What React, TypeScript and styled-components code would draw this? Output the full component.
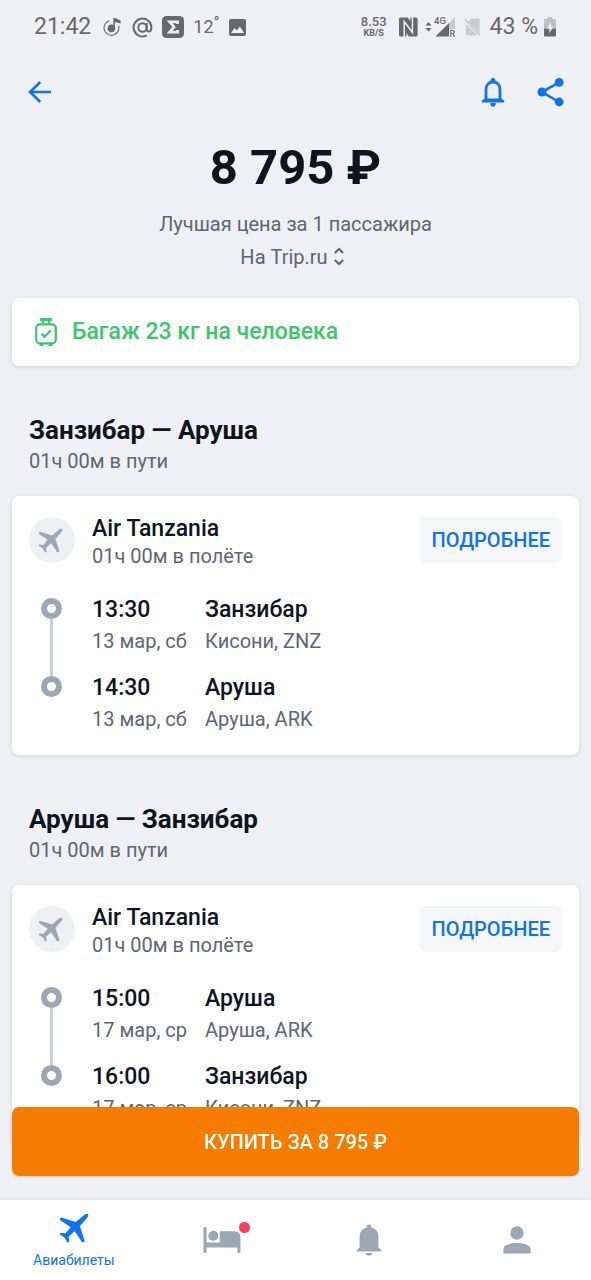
import React from 'react';
import styled, { createGlobalStyle } from 'styled-components';

const color = {
  page: '#eef0f4',
  ink: '#0e151f',
  muted: '#5d6673',
  blue: '#0f73ee',
  green: '#3cc76c',
  orange: '#f67c00',
  steel: '#9ca7b5',
  status: '#68696b',
};

const GlobalStyle = createGlobalStyle`
  *, *::before, *::after { box-sizing: border-box; }
  body {
    margin: 0;
    background: ${color.page};
    color: ${color.ink};
    font-family: Roboto, 'Noto Sans', sans-serif;
  }
  h1, h2, h3, p, ol, ul { margin: 0; padding: 0; }
  ol, ul { list-style: none; }
  svg { display: block; flex: none; }
`;

const Screen = styled.div`
  display: flex;
  flex-direction: column;
  height: 100vh;
`;

/* ---------- status bar ---------- */

const StatusBar = styled.header`
  display: flex;
  justify-content: space-between;
  align-items: center;
  height: 54px;
  padding: 0 35px 0 34px;
  color: ${color.status};
`;

const StatusGroup = styled.div<{ $gap: number }>`
  display: flex;
  align-items: center;
  gap: ${({ $gap }) => $gap}px;
`;

const StatusText = styled.span`
  font-size: 23px;
  line-height: 28px;
`;

const Clock = styled(StatusText)`
  padding-right: 3px;
`;

const Temperature = styled.span`
  display: flex;
  font-size: 18px;
  line-height: 28px;
`;

const Degree = styled.span`
  font-size: 16px;
  line-height: 20px;
`;

const Speed = styled.span`
  display: flex;
  flex-direction: column;
  align-items: center;
  padding-right: 6px;
  font-size: 13px;
  font-weight: 500;
  line-height: 12px;
`;

const SpeedUnit = styled.small`
  font-size: 9px;
  font-weight: 700;
  line-height: 10px;
`;

/* ---------- toolbar and price ---------- */

const Toolbar = styled.div`
  display: flex;
  justify-content: space-between;
  align-items: center;
  height: 76px;
  padding: 0 26px;
`;

const ToolbarActions = styled.div`
  display: flex;
  gap: 32px;
`;

const IconButton = styled.button`
  display: flex;
  padding: 0;
  border: 0;
  background: none;
  color: ${color.blue};
  cursor: pointer;
`;

const Scroller = styled.main`
  flex: 1;
  min-height: 0;
  overflow-y: auto;
  padding: 0 12px;
  scrollbar-width: none;
`;

const Hero = styled.section`
  display: flex;
  flex-direction: column;
  align-items: center;
  padding: 10px 0 25px;
`;

const Price = styled.h1`
  font-size: 49px;
  font-weight: 700;
  line-height: 56px;
`;

const Note = styled.p`
  margin-top: 11px;
  color: ${color.muted};
  font-size: 20px;
  line-height: 34px;
`;

const AgentButton = styled.button`
  display: flex;
  align-items: center;
  gap: 5px;
  padding: 0 6px 0 0;
  border: 0;
  background: none;
  color: ${color.muted};
  font: inherit;
  font-size: 20px;
  line-height: 32px;
  cursor: pointer;
`;

/* ---------- cards ---------- */

const Card = styled.div`
  border-radius: 7px;
  background: #fff;
  box-shadow: 0 1px 4px rgba(40, 50, 80, 0.14);
`;

const Baggage = styled(Card)`
  display: flex;
  align-items: center;
  gap: 14px;
  min-height: 68px;
  padding: 0 22px;
  color: ${color.green};
  font-size: 23px;
  font-weight: 500;
  line-height: 32px;
`;

const Leg = styled.section`
  margin-top: 48px;
`;

const LegTitle = styled.h2`
  padding: 0 17px;
  font-size: 26px;
  font-weight: 700;
  line-height: 32px;
`;

const LegDuration = styled.p`
  padding: 0 17px;
  color: ${color.muted};
  font-size: 20px;
  line-height: 30px;
`;

const FlightCard = styled(Card)`
  margin-top: 20px;
  padding: 21px 17px;
`;

const Airline = styled.div`
  display: flex;
  align-items: flex-start;
  gap: 17px;
`;

const AirlineLogo = styled.div`
  display: flex;
  justify-content: center;
  align-items: center;
  width: 46px;
  height: 46px;
  padding-right: 3px;
  border-radius: 50%;
  background: ${color.page};
  color: ${color.steel};
`;

const AirlineInfo = styled.div`
  flex: 1;
`;

const AirlineName = styled.h3`
  font-size: 23px;
  font-weight: 500;
  line-height: 24px;
`;

const Muted = styled.p`
  color: ${color.muted};
  font-size: 20px;
  line-height: 30px;
`;

const DetailsButton = styled.button`
  height: 46px;
  padding: 0 12px;
  border: 0;
  border-radius: 7px;
  background: #f5f6f8;
  color: ${color.blue};
  font: inherit;
  font-size: 20px;
  font-weight: 500;
  cursor: pointer;
`;

const Route = styled.div`
  display: flex;
  gap: 17px;
  margin-top: 23px;
`;

const Track = styled.div`
  display: flex;
  flex-direction: column;
  align-items: center;
  width: 46px;
  padding: 4px 1px 37px 0;
`;

const Ring = styled.span`
  width: 21px;
  height: 21px;
  border: 6px solid ${color.steel};
  border-radius: 50%;
`;

const TrackLine = styled.span`
  flex: 1;
  width: 3px;
  background: #ccd0d6;
`;

const Stops = styled.ol`
  display: flex;
  flex: 1;
  flex-direction: column;
  gap: 16px;
`;

const Stop = styled.li`
  display: grid;
  grid-template-columns: 113px 1fr;
`;

const Strong = styled.p`
  font-size: 23px;
  font-weight: 500;
  line-height: 32px;
`;

const BuyButton = styled.button`
  position: sticky;
  bottom: 24px;
  display: block;
  width: 100%;
  height: 69px;
  margin: 24px 0;
  border: 0;
  border-radius: 7px;
  background: ${color.orange};
  box-shadow: 0 1px 3px rgba(40, 50, 80, 0.14);
  color: #fff;
  font: inherit;
  font-size: 20px;
  font-weight: 500;
  cursor: pointer;
`;

/* ---------- bottom navigation ---------- */

const TabBar = styled.nav`
  display: grid;
  grid-template-columns: repeat(4, 1fr);
  height: 80px;
  background: #fff;
  box-shadow: 0 -1px 3px rgba(40, 50, 80, 0.1);
`;

const Tab = styled.a<{ $active?: boolean }>`
  display: flex;
  flex-direction: column;
  justify-content: center;
  align-items: center;
  gap: 7px;
  padding-top: ${({ $active }) => ($active ? 2 : 0)}px;
  color: ${({ $active }) => ($active ? color.blue : color.steel)};
  font-size: 14px;
  line-height: 20px;
  text-decoration: none;
`;

const TabIcon = styled.span`
  position: relative;
`;

const Badge = styled.span`
  position: absolute;
  top: -5px;
  right: -9px;
  width: 11px;
  height: 11px;
  border-radius: 50%;
  background: #fb3f5b;
`;

/* ---------- icons ---------- */

const Plane = ({ size }: { size: number }) => (
  <svg width={size} height={size} viewBox="0 0 30 30" fill="currentColor" aria-hidden="true">
    <path d="M25.2 1.9C26.6.7 28.2.6 28.9 1.2C29.5 1.9 29.3 3.5 28.1 4.8L20.9 13.2L25.6 27.4C25.8 28.3 25 29.3 23.6 29.2L22.8 28.8L15.8 18.3L9.6 23.6L10.3 27.9C10.3 28.8 9.3 29.5 8.4 29.2L5.6 24.4L.9 21.6C.5 20.7 1.2 19.7 2.1 19.7L6.4 20.4L11.7 14.2L1.2 7.2C.7 6.4 1 5 2.4 4.5L16.8 9.1Z" />
  </svg>
);

const BackIcon = () => (
  <svg width="26" height="26" viewBox="0 0 26 26" fill="none" stroke="currentColor" strokeWidth="2.6" aria-hidden="true">
    <path d="M25 13H4M14.3 3L4 13L14.3 23" />
  </svg>
);

const BellOutlineIcon = () => (
  <svg width="24" height="30" viewBox="0 0 24 30" aria-hidden="true">
    <path d="M5 22.5V12.5C5 7.5 8 5 12 5S19 7.5 19 12.5V22.5" fill="none" stroke="currentColor" strokeWidth="2.8" />
    <path d="M9.6 4.6V3.4A2.4 2.4 0 0 1 14.4 3.4V4.6ZM.8 23.4L3.8 21.6H20.2L23.2 23.4V25.6H.8ZM9.2 26H14.8C14.8 28.4 13.6 29.8 12 29.8S9.2 28.4 9.2 26Z" fill="currentColor" />
  </svg>
);

const ShareIcon = () => (
  <svg width="28" height="30" viewBox="0 0 28 30" fill="currentColor" aria-hidden="true">
    <path d="M22 5.3L5 15L22 25" fill="none" stroke="currentColor" strokeWidth="2.6" />
    <circle cx="5" cy="15" r="4.5" />
    <circle cx="22.2" cy="5.3" r="4.4" />
    <circle cx="22.2" cy="25" r="4.4" />
  </svg>
);

const ChevronsIcon = () => (
  <svg width="12" height="20" viewBox="0 0 12 20" fill="none" stroke="currentColor" strokeWidth="2" aria-hidden="true">
    <path d="M1.8 6L6 2L10.2 6M1.8 13L6 17L10.2 13" />
  </svg>
);

const SuitcaseIcon = () => (
  <svg width="24" height="30" viewBox="0 0 24 30" fill="none" stroke="currentColor" strokeWidth="2.2" aria-hidden="true">
    <path d="M6 2.6H18" strokeWidth="3" />
    <path d="M9 3V7M15 3V7" strokeWidth="2.4" />
    <rect x="2.2" y="7.4" width="19.6" height="19" rx="3.6" />
    <path d="M7.4 16.6L10.6 19.6L17 13.2" />
    <path d="M5.6 28H9.4M14.6 28H18.4" />
  </svg>
);

const BedIcon = () => (
  <svg width="38" height="26" viewBox="0 0 38 26" fill="currentColor" aria-hidden="true">
    <path d="M.5 1Q.5 0 1.5 0H2.6Q3.6 0 3.6 1V15.6H16.8V4.2H31Q37.5 4.4 37.5 10.6V25Q37.5 26 36.5 26H35.4Q34.4 26 34.4 25V20.6H3.6V25Q3.6 26 2.6 26H1.5Q.5 26 .5 25Z" />
    <circle cx="10.4" cy="8.8" r="5" />
  </svg>
);

const BellIcon = () => (
  <svg width="26" height="32" viewBox="0 0 26 32" fill="currentColor" aria-hidden="true">
    <path d="M10.8 3.6V2.6A2.2 2.2 0 0 1 15.2 2.6V3.6C19.6 4.6 22.4 7.8 22.4 12.6V23.2L25.4 26.4V27.4H.6V26.4L3.6 23.2V12.6C3.6 7.8 6.4 4.6 10.8 3.6ZM9.8 28.9H16.2C16 30.8 14.8 31.6 13 31.6S10 30.8 9.8 28.9Z" />
  </svg>
);

const PersonIcon = () => (
  <svg width="28" height="28" viewBox="0 0 28 28" fill="currentColor" aria-hidden="true">
    <circle cx="14" cy="7" r="6.7" />
    <path d="M.4 27.4V23.4C.6 19 7 17 14 17S27.4 19 27.6 23.4V27.4Z" />
  </svg>
);

const NoteIcon = () => (
  <svg width="20" height="20" viewBox="0 0 20 20" aria-hidden="true">
    <path d="M6.5 3.8A7.4 7.4 0 1 0 15.6 9" fill="none" stroke="currentColor" strokeWidth="1.1" />
    <circle cx="8.4" cy="11.4" r="3.8" fill="currentColor" />
    <path d="M10.4 11V1H12L17.6 3.4V6.6L12 5V11Z" fill="currentColor" />
  </svg>
);

const AtIcon = () => (
  <svg width="21" height="21" viewBox="0 0 21 21" fill="none" stroke="currentColor" strokeWidth="2" aria-hidden="true">
    <circle cx="10.5" cy="10.5" r="4.2" />
    <path d="M14.7 6V12.2C14.7 15.6 19.4 15.6 19.4 10.5A8.9 8.9 0 1 0 14.8 18.3" />
  </svg>
);

const SigmaIcon = () => (
  <svg width="22" height="22" viewBox="0 0 22 22" aria-hidden="true">
    <rect width="22" height="22" rx="4.5" fill="currentColor" />
    <path d="M15.6 8V5.8H7.6L12 11L7.6 16.2H15.6V14" fill="none" stroke={color.page} strokeWidth="2.7" />
  </svg>
);

const PictureIcon = () => (
  <svg width="17" height="17" viewBox="0 0 17 17" aria-hidden="true">
    <rect width="17" height="17" rx="2" fill="currentColor" />
    <path d="M2 14L5.6 9L7.8 11.6L10.8 7.6L15.2 14Z" fill={color.page} />
  </svg>
);

const NfcIcon = () => (
  <svg width="20" height="20" viewBox="0 0 20 20" aria-hidden="true">
    <rect width="18.6" height="19" y=".5" rx="1.6" fill="currentColor" />
    <path d="M5.2 20V4.6L13.4 15.4V0" fill="none" stroke={color.page} strokeWidth="1.5" />
    <path d="M7.4 20V16L9.8 19.6V20ZM11.2 0V4L8.8 .6V0Z" fill={color.page} />
  </svg>
);

const SignalIcon = () => (
  <svg width="33" height="22" viewBox="0 0 33 22" fill="currentColor" aria-hidden="true">
    <path d="M3.5 6L6.6 9.6H.4ZM3.5 15.6L6.6 12H.4Z" />
    <path d="M30 1V13H24V7Z" fill="#c9cacd" />
    <path d="M10.4 20.6L24 7V20.6Z" />
    <text x="9" y="8.4" fontSize="9.5" fontWeight="500">4G</text>
    <text x="24.4" y="20.6" fontSize="9" fontWeight="500">R</text>
  </svg>
);

const NoSimIcon = () => (
  <svg width="20" height="20" viewBox="0 0 20 20" aria-hidden="true">
    <path d="M7 1.4H15.6V17.2L4 4.4ZM1.8 6.8L13.4 18.6H1.8Z" fill="#cbccd0" />
    <path d="M.8 2.4L15.8 18.8" stroke="#cbccd0" strokeWidth="1.6" />
  </svg>
);

const BatteryIcon = () => (
  <svg width="12" height="20" viewBox="0 0 12 20" aria-hidden="true">
    <path d="M3.6 0H8.4V2H12V11.6H0V2H3.6Z" fill="#bfc0c4" />
    <path d="M0 11.6H12V18.4Q12 19.6 10.8 19.6H1.2Q0 19.6 0 18.4Z" fill="currentColor" />
    <path d="M7 4.6L3 11.6H5.4V16.6L9.2 9.8H7Z" fill={color.page} />
  </svg>
);

/* ---------- data ---------- */

interface StopData {
  time: string;
  date: string;
  city: string;
  airport: string;
}

interface LegData {
  title: string;
  stops: StopData[];
}

const legs: LegData[] = [
  {
    title: 'Занзибар — Аруша',
    stops: [
      { time: '13:30', date: '13 мар, сб', city: 'Занзибар', airport: 'Кисони, ZNZ' },
      { time: '14:30', date: '13 мар, сб', city: 'Аруша', airport: 'Аруша, ARK' },
    ],
  },
  {
    title: 'Аруша — Занзибар',
    stops: [
      { time: '15:00', date: '17 мар, ср', city: 'Аруша', airport: 'Аруша, ARK' },
      { time: '16:00', date: '17 мар, ср', city: 'Занзибар', airport: 'Кисони, ZNZ' },
    ],
  },
];

const FlightLeg = ({ title, stops }: LegData) => (
  <Leg>
    <LegTitle>{title}</LegTitle>
    <LegDuration>01ч 00м в пути</LegDuration>
    <FlightCard>
      <Airline>
        <AirlineLogo>
          <Plane size={25} />
        </AirlineLogo>
        <AirlineInfo>
          <AirlineName>Air Tanzania</AirlineName>
          <Muted>01ч 00м в полёте</Muted>
        </AirlineInfo>
        <DetailsButton type="button">ПОДРОБНЕЕ</DetailsButton>
      </Airline>
      <Route>
        <Track>
          <Ring />
          <TrackLine />
          <Ring />
        </Track>
        <Stops>
          {stops.map((stop) => (
            <Stop key={stop.time}>
              <Strong>{stop.time}</Strong>
              <Strong>{stop.city}</Strong>
              <Muted>{stop.date}</Muted>
              <Muted>{stop.airport}</Muted>
            </Stop>
          ))}
        </Stops>
      </Route>
    </FlightCard>
  </Leg>
);

export default function App() {
  return (
    <Screen>
      <GlobalStyle />
      <StatusBar>
        <StatusGroup $gap={9}>
          <Clock>21:42</Clock>
          <NoteIcon />
          <AtIcon />
          <SigmaIcon />
          <Temperature>
            12
            <Degree>°</Degree>
          </Temperature>
          <PictureIcon />
        </StatusGroup>
        <StatusGroup $gap={6}>
          <Speed>
            8.53
            <SpeedUnit>KB/S</SpeedUnit>
          </Speed>
          <NfcIcon />
          <SignalIcon />
          <NoSimIcon />
          <StatusText>43 %</StatusText>
          <BatteryIcon />
        </StatusGroup>
      </StatusBar>
      <Toolbar>
        <IconButton type="button" aria-label="Назад">
          <BackIcon />
        </IconButton>
        <ToolbarActions>
          <IconButton type="button" aria-label="Следить за ценой">
            <BellOutlineIcon />
          </IconButton>
          <IconButton type="button" aria-label="Поделиться">
            <ShareIcon />
          </IconButton>
        </ToolbarActions>
      </Toolbar>
      <Scroller>
        <Hero>
          <Price>8 795 ₽</Price>
          <Note>Лучшая цена за 1 пассажира</Note>
          <AgentButton type="button">
            На Trip.ru
            <ChevronsIcon />
          </AgentButton>
        </Hero>
        <Baggage>
          <SuitcaseIcon />
          Багаж 23 кг на человека
        </Baggage>
        {legs.map((leg) => (
          <FlightLeg key={leg.title} {...leg} />
        ))}
        <BuyButton type="button">КУПИТЬ ЗА 8 795 ₽</BuyButton>
      </Scroller>
      <TabBar>
        <Tab href="#flights" $active>
          <Plane size={30} />
          Авиабилеты
        </Tab>
        <Tab href="#hotels" aria-label="Отели">
          <TabIcon>
            <BedIcon />
            <Badge />
          </TabIcon>
        </Tab>
        <Tab href="#notifications" aria-label="Уведомления">
          <BellIcon />
        </Tab>
        <Tab href="#profile" aria-label="Профиль">
          <PersonIcon />
        </Tab>
      </TabBar>
    </Screen>
  );
}
